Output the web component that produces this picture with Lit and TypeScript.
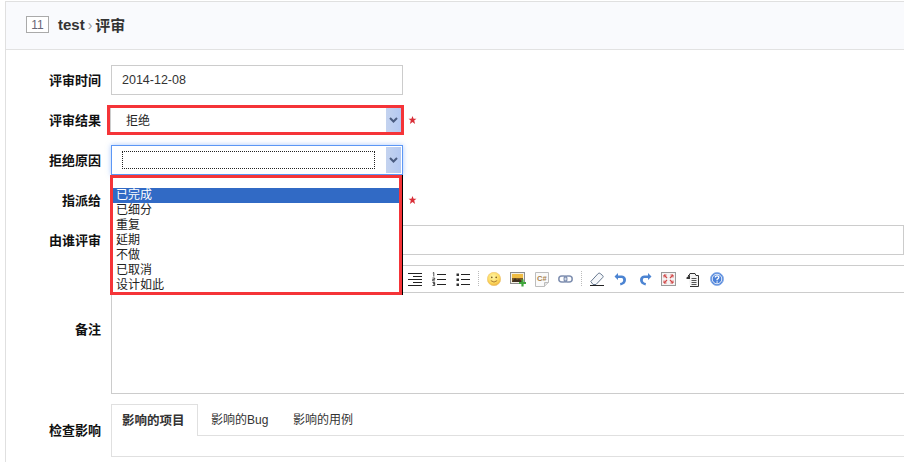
import { LitElement, html, css, svg } from "lit";
import { customElement } from "lit/decorators.js";

const star = svg`<svg class="st" width="9" height="8" viewBox="0 0 9 8"><path d="M4.500 0l1.100 2.700h2.900L6.200 4.600 7.100 8 4.500 6.100 1.900 8l.9-3.400L.5 2.700h2.900z" fill="#d92f38"/></svg>`;

const sep = { m: 0, s: svg`<svg class="ic" width="1" height="16" viewBox="0 0 1 16"><path d="M.5 0v16" stroke="#bbb" stroke-dasharray="1 1"/></svg>` };

/* x: left edge of each toolbar item on the page */
const tools = [
  { x: 408, w: 14, s: svg`<svg class="ic" width="14" height="14" viewBox="0 0 14 14" fill="none" stroke="#222"><path d="M0 1.500h14M5 4.500h9M0 7.500h14M5 10.500h9M0 13.500h14"/></svg>` },
  { x: 432, w: 14, s: svg`<svg class="ic" width="14" height="14" viewBox="0 0 14 14" fill="none" stroke="#222"><path d="M5 2.500h9M5 7.500h9M5 12.500h9"/><path d="M.8 1l1-.5v4M.5 6h2.200v1.400H.7v1.500h2.200M.5 10.500h2.200v1.300H1.200h1.500v1.700H.5" stroke-width=".8"/></svg>` },
  { x: 456, w: 14, s: svg`<svg class="ic" width="14" height="14" viewBox="0 0 14 14" fill="none" stroke="#222"><path d="M5 2.500h9M5 7.500h9M5 12.500h9"/><path d="M.5 1.500h2.500v2.500H.5zM.5 6.500h2.500v2.500H.5zM.5 11.500h2.500v2.500H.5z" fill="#333" stroke="none"/></svg>` },
  { x: 478, w: 1, s: sep.s },
  { x: 487, w: 14, s: svg`<svg class="ic" width="14" height="14" viewBox="0 0 14 14"><defs><radialGradient id="sm" cx=".45" cy=".35" r=".7"><stop offset="0" stop-color="#fff6a8"/><stop offset=".65" stop-color="#fcd75c"/><stop offset="1" stop-color="#e8a63a"/></radialGradient></defs><circle cx="7" cy="7" r="6.700" fill="url(#sm)" stroke="#ecc26e" stroke-width=".6"/><circle cx="4.800" cy="5.400" r=".8" fill="#7a5a20"/><circle cx="9.200" cy="5.400" r=".8" fill="#7a5a20"/><path d="M3.800 8.600q3.200 3 6.400 0" fill="none" stroke="#a2702a" stroke-width=".9"/></svg>` },
  { x: 510, w: 16, s: svg`<svg class="ic" width="16" height="15" viewBox="0 0 16 15"><rect x=".5" y=".5" width="14" height="11" fill="#f4f0e4" stroke="#8d8d8d"/><rect x="2" y="2" width="11" height="4" fill="#f0bd44"/><rect x="2" y="6" width="11" height="4" fill="#7b5a26"/><path d="M2 10l3-4 2 2 2-1 4 3z" fill="#3e3020"/><path d="M12.500 7.500v7M9 11h7" stroke="#3fa63c" stroke-width="2.200"/></svg>` },
  { x: 535, w: 14, s: svg`<svg class="ic" width="14" height="15" viewBox="0 0 14 15"><path d="M.5.500h13v10l-4 4H.5z" fill="#fafafa" stroke="#bdbdbd"/><path d="M9.500 14.500v-4h4" fill="#e4e4e4" stroke="#bdbdbd"/><text x="2" y="9" font-family="Liberation Sans" font-size="7.500" font-weight="bold" fill="#a8814a">C#</text></svg>` },
  { x: 558, w: 15, s: svg`<svg class="ic" width="15" height="14" viewBox="0 0 15 14" fill="none"><rect x=".8" y="4" width="8" height="6" rx="3" stroke="#7f8fb0" stroke-width="1.500"/><rect x="6.200" y="4" width="8" height="6" rx="3" stroke="#7f8fb0" stroke-width="1.500"/><path d="M5 7h5" stroke="#c5cede"/></svg>` },
  { x: 581, w: 1, s: sep.s },
  { x: 590, w: 14, s: svg`<svg class="ic" width="14" height="14" viewBox="0 0 14 14"><path d="M.8 9.500L8.200 1.500q1-.9 2 0l2.600 2.200q.8.8 0 1.700L6 12.500H3z" fill="#f6f8fb" stroke="#66788f"/><path d="M0 13.500h14" stroke="#222"/></svg>` },
  { x: 614, w: 13, s: svg`<svg class="ic" width="13" height="14" viewBox="0 0 13 14"><path d="M4 1v7L.5 4.500 4 1zM3.500 3.500h4.500q4 .5 4 4.500t-5.500 5.500L6 11q3.200-.5 3.200-3T7 6H3.500z" fill="#4c84d2"/></svg>` },
  { x: 639, w: 13, s: svg`<svg class="ic" width="13" height="14" viewBox="0 0 13 14"><g transform="matrix(-1 0 0 1 13 0)"><path d="M4 1v7L.5 4.500 4 1zM3.500 3.500h4.500q4 .5 4 4.500t-5.500 5.500L6 11q3.200-.5 3.200-3T7 6H3.500z" fill="#4c84d2"/></g></svg>` },
  { x: 661, w: 15, s: svg`<svg class="ic" width="15" height="14" viewBox="0 0 15 14"><rect x=".5" y=".5" width="14" height="13" fill="#f5f3f3" stroke="#9a9a9a"/><path d="M3 3l3 3M12 3L9 6M3 11l3-3M12 11L9 8" stroke="#d24a4a" stroke-width="1.300"/><path d="M3 5.500V3h2.500M12 5.500V3H9.500M3 8.500V11h2.500M12 8.500V11H9.500" fill="none" stroke="#d24a4a"/></svg>` },
  { x: 686, w: 14, s: svg`<svg class="ic" width="14" height="15" viewBox="0 0 14 15"><path d="M2 3.500h1l1-2h5l1 2h2.500v11H4" fill="#f4f4f4" stroke="#333"/><path d="M.5 5.500L4 3v4H.5z" fill="#333"/><path d="M5.500 6.500h5M5.500 8.500h5M5.500 10.500h5M5.500 12.500h5" stroke="#555"/></svg>` },
  { x: 710, w: 14, s: svg`<svg class="ic" width="14" height="14" viewBox="0 0 14 14"><circle cx="7" cy="7" r="6.500" fill="#4a80d8" stroke="#8fb2ea"/><circle cx="7" cy="7" r="4.800" fill="none" stroke="#fff" stroke-width=".9"/><path d="M5.300 5.500q0-1.600 1.800-1.600t1.700 1.600q0 1-1.700 1.800v1" fill="none" stroke="#fff" stroke-width="1.300"/><circle cx="7.100" cy="10" r=".8" fill="#fff"/></svg>` },
];

@customElement("app-root")
export class AppRoot extends LitElement {
  static styles = css`
    :host { display: block; width: 904px; height: 462px; overflow: hidden; background: #fff;
      font: 12px "Liberation Sans", "Noto Sans CJK SC", sans-serif; color: #333; }
    .shell { margin: 1px 0 0 5px; width: 1000px; height: 461px; border: 1px solid #e0e0e0; border-width: 1px 0 0 1px; position: relative; box-sizing: border-box; }
    .head { height: 48px; box-sizing: border-box; background: #f9fafd; border-bottom: 1px solid #e2e2e2; display: flex; align-items: center; padding: 0 0 2px 20px; }
    .id { width: 23px; height: 17px; box-sizing: border-box; border: 1px solid #aaa; background: #fff; display: flex; align-items: center; justify-content: center; color: #667; font-size: 12px; }
    .crumb { margin-left: 9px; font-size: 15px; font-weight: bold; color: #333; display: flex; gap: 3px; align-items: center; }
    .crumb i { font-style: normal; font-weight: normal; color: #999; font-size: 14px; }
    form { display: grid; grid-template-columns: 95px 292px 1fr; grid-template-rows: 30px 30px 30px 30px 30px 129px 53px; column-gap: 10px; row-gap: 10px; padding-top: 15px; width: 898px; }
    .l { font-weight: bold; color: #111; text-align: right; align-self: center; font-size: 13px; padding-bottom: 2px; }
    .c { box-sizing: border-box; height: 30px; border: 1px solid #ccc; background: #fff; display: flex; align-items: center; padding: 0 0 1px 10px; color: #333; font-size: 12.5px; }
    .star { align-self: center; margin-left: -5px; }
    .st { display: block; }
    .btn { position: absolute; right: 1px; top: 1px; bottom: 1px; width: 15px; background: linear-gradient(90deg,#c4d3ef,#b4c9f2); display: flex; align-items: center; justify-content: center; }
    .sel { position: relative; }
    .res { outline: 3px solid #f53438; border: none; border-left: 1px solid #ccc; margin: 3px 0 0 -1px; height: 24px; width: 291px; padding: 0 0 1px 15px; color: #222; font-size: 12px; }
    .res .btn { right: 0; top: 0; bottom: 0; }
    .rej { border-color: #5c97f5; box-shadow: 0 0 5px rgba(90,150,250,.5); padding: 0 0 0 10px; }
    .dots { width: 253px; height: 18px; box-sizing: border-box; border: 1px dotted #222; }
    .wide { grid-column: 2 / span 2; }
    .editor { box-sizing: border-box; border: 1px solid #ccc; border-right: 0; }
    .bar { height: 27px; box-sizing: border-box; border-bottom: 1px solid #ccc; display: flex; align-items: center; }
    .ic { display: block; flex: none; }
    .impact { box-sizing: border-box; border-bottom: 1px solid #e0e0e0; border-left: 1px solid #e0e0e0; height: 53px; }
    .tabs { display: flex; height: 32px; box-sizing: border-box; border-bottom: 1px solid #e0e0e0; }
    .tab { display: flex; align-items: center; color: #333; padding: 0 0 2px 13px; width: 82px; box-sizing: border-box; }
    .tab.on { font-weight: bold; font-size: 12.5px; border: 1px solid #e0e0e0; border-width: 1px 1px 0 0; background: #fff; height: 32px; width: 86px; padding: 0 0 2px 10px; }
    .list { position: absolute; left: 104px; top: 173px; width: 292px; height: 120px; box-sizing: border-box; border: 3px solid #f53438; background: #fff; padding-top: 10px; line-height: 15px; color: #222; box-shadow: 1px 0 0 #000; z-index: 2; }
    .list div { height: 15px; padding-left: 3px; }
    .list .hl { background: #316ac5; color: #fff; }
  `;

  render() {
    const chev = html`<svg width="9" height="6" viewBox="0 0 9 6"><path d="M1 1l3.500 3.500L8 1" fill="none" stroke="#4a5c80" stroke-width="2"/></svg>`;
    let cursor = 112;
    const bar = tools.map((t) => {
      const m = t.x - cursor;
      cursor = t.x + t.w;
      return html`<span style="margin-left:${m}px">${t.s}</span>`;
    });
    return html`<div class="shell">
      <div class="head"><span class="id">11</span><span class="crumb">test<i>›</i>评审</span></div>
      <form>
        <div class="l">评审时间</div><div class="c">2014-12-08</div><div></div>
        <div class="l">评审结果</div><div class="c sel res">拒绝<span class="btn">${chev}</span></div><div class="star">${star}</div>
        <div class="l">拒绝原因</div><div class="c sel rej"><span class="dots"></span><span class="btn">${chev}</span></div><div></div>
        <div class="l">指派给</div><div></div><div class="star">${star}</div>
        <div class="l">由谁评审</div><div class="c wide"></div>
        <div class="l">备注</div>
        <div class="editor wide"><div class="bar">${bar}</div></div>
        <div class="l">检查影响</div>
        <div class="impact wide"><div class="tabs"><span class="tab on">影响的项目</span><span class="tab">影响的Bug</span><span class="tab">影响的用例</span></div></div>
      </form>
      <div class="list"><div class="hl">已完成</div><div>已细分</div><div>重复</div><div>延期</div><div>不做</div><div>已取消</div><div>设计如此</div></div>
    </div>`;
  }
}
